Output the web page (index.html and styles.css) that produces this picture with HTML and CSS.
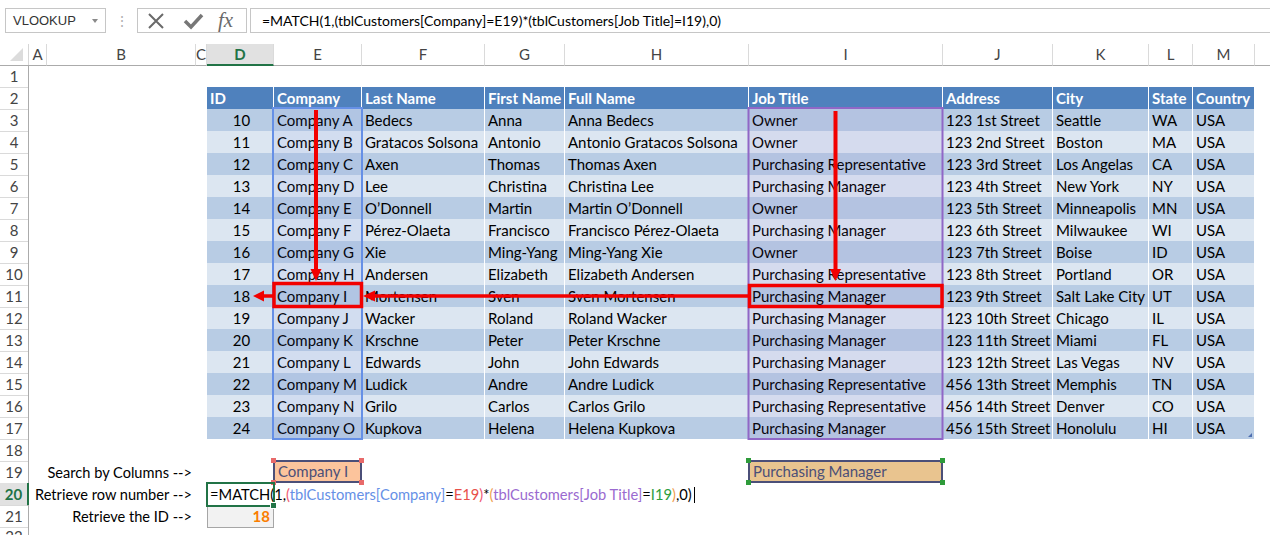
FILE: index.html
```html
<!DOCTYPE html>
<html lang="en">
<head>
    <meta charset="UTF-8">
    <title>MATCH with multiple criteria</title>
    <link rel="stylesheet" href="styles.css">
</head>
<body>

<div class="page">

    <!-- formula bar -->
    <div class="toolbar">
        <div class="namebox">VLOOKUP<span class="dropdown"></span></div>
        <div class="grip">&#8942;</div>
        <div class="fxbox">
            <svg width="108" height="24" viewBox="0 0 108 24">
                <path d="M11 5 L25 19 M25 5 L11 19" stroke="#6a6a6a" stroke-width="2" fill="none"/>
                <path d="M47 12 L53 18 L64 6" stroke="#777" stroke-width="3.5" fill="none"/>
            </svg>
            <span class="fx">fx</span>
        </div>
        <div class="formula">=MATCH(1,(tblCustomers[Company]=E19)*(tblCustomers[Job Title]=I19),0)</div>
    </div>

    <div class="sheet">
        <div class="row colhead">
            <span class="corner"><svg width="14" height="14" viewBox="0 0 14 14"><path d="M13 0 L13 13 L0 13 Z" fill="#dcdcdc"/></svg></span>
            <span class="ch">A</span><span class="ch">B</span><span class="ch">C</span><span class="ch active">D</span>
            <span class="ch">E</span><span class="ch">F</span><span class="ch">G</span><span class="ch">H</span>
            <span class="ch">I</span><span class="ch">J</span><span class="ch">K</span><span class="ch">L</span><span class="ch">M</span><span class="ch blank"></span>
        </div>

        <div class="row"><span class="rh">1</span></div>

        <div class="row thead">
            <span class="rh">2</span><span class="lead"></span>
            <span class="c">ID</span><span class="c">Company</span><span class="c">Last Name</span><span class="c">First Name</span><span class="c">Full Name</span><span class="c">Job Title</span><span class="c">Address</span><span class="c">City</span><span class="c">State</span><span class="c">Country</span>
        </div>
        <div class="row dark">
            <span class="rh">3</span><span class="lead"></span>
            <span class="c id">10</span><span class="c">Company A</span><span class="c">Bedecs</span><span class="c">Anna</span><span class="c">Anna Bedecs</span><span class="c">Owner</span><span class="c">123 1st Street</span><span class="c">Seattle</span><span class="c">WA</span><span class="c">USA</span>
        </div>
        <div class="row light">
            <span class="rh">4</span><span class="lead"></span>
            <span class="c id">11</span><span class="c">Company B</span><span class="c">Gratacos Solsona</span><span class="c">Antonio</span><span class="c">Antonio Gratacos Solsona</span><span class="c">Owner</span><span class="c">123 2nd Street</span><span class="c">Boston</span><span class="c">MA</span><span class="c">USA</span>
        </div>
        <div class="row dark">
            <span class="rh">5</span><span class="lead"></span>
            <span class="c id">12</span><span class="c">Company C</span><span class="c">Axen</span><span class="c">Thomas</span><span class="c">Thomas Axen</span><span class="c">Purchasing Representative</span><span class="c">123 3rd Street</span><span class="c">Los Angelas</span><span class="c">CA</span><span class="c">USA</span>
        </div>
        <div class="row light">
            <span class="rh">6</span><span class="lead"></span>
            <span class="c id">13</span><span class="c">Company D</span><span class="c">Lee</span><span class="c">Christina</span><span class="c">Christina Lee</span><span class="c">Purchasing Manager</span><span class="c">123 4th Street</span><span class="c">New York</span><span class="c">NY</span><span class="c">USA</span>
        </div>
        <div class="row dark">
            <span class="rh">7</span><span class="lead"></span>
            <span class="c id">14</span><span class="c">Company E</span><span class="c">O’Donnell</span><span class="c">Martin</span><span class="c">Martin O’Donnell</span><span class="c">Owner</span><span class="c">123 5th Street</span><span class="c">Minneapolis</span><span class="c">MN</span><span class="c">USA</span>
        </div>
        <div class="row light">
            <span class="rh">8</span><span class="lead"></span>
            <span class="c id">15</span><span class="c">Company F</span><span class="c">Pérez-Olaeta</span><span class="c">Francisco</span><span class="c">Francisco Pérez-Olaeta</span><span class="c">Purchasing Manager</span><span class="c">123 6th Street</span><span class="c">Milwaukee</span><span class="c">WI</span><span class="c">USA</span>
        </div>
        <div class="row dark">
            <span class="rh">9</span><span class="lead"></span>
            <span class="c id">16</span><span class="c">Company G</span><span class="c">Xie</span><span class="c">Ming-Yang</span><span class="c">Ming-Yang Xie</span><span class="c">Owner</span><span class="c">123 7th Street</span><span class="c">Boise</span><span class="c">ID</span><span class="c">USA</span>
        </div>
        <div class="row light">
            <span class="rh">10</span><span class="lead"></span>
            <span class="c id">17</span><span class="c">Company H</span><span class="c">Andersen</span><span class="c">Elizabeth</span><span class="c">Elizabeth Andersen</span><span class="c">Purchasing Representative</span><span class="c">123 8th Street</span><span class="c">Portland</span><span class="c">OR</span><span class="c">USA</span>
        </div>
        <div class="row dark">
            <span class="rh">11</span><span class="lead"></span>
            <span class="c id">18</span><span class="c">Company I</span><span class="c">Mortensen</span><span class="c">Sven</span><span class="c">Sven Mortensen</span><span class="c">Purchasing Manager</span><span class="c">123 9th Street</span><span class="c">Salt Lake City</span><span class="c">UT</span><span class="c">USA</span>
        </div>
        <div class="row light">
            <span class="rh">12</span><span class="lead"></span>
            <span class="c id">19</span><span class="c">Company J</span><span class="c">Wacker</span><span class="c">Roland</span><span class="c">Roland Wacker</span><span class="c">Purchasing Manager</span><span class="c">123 10th Street</span><span class="c">Chicago</span><span class="c">IL</span><span class="c">USA</span>
        </div>
        <div class="row dark">
            <span class="rh">13</span><span class="lead"></span>
            <span class="c id">20</span><span class="c">Company K</span><span class="c">Krschne</span><span class="c">Peter</span><span class="c">Peter Krschne</span><span class="c">Purchasing Manager</span><span class="c">123 11th Street</span><span class="c">Miami</span><span class="c">FL</span><span class="c">USA</span>
        </div>
        <div class="row light">
            <span class="rh">14</span><span class="lead"></span>
            <span class="c id">21</span><span class="c">Company L</span><span class="c">Edwards</span><span class="c">John</span><span class="c">John Edwards</span><span class="c">Purchasing Manager</span><span class="c">123 12th Street</span><span class="c">Las Vegas</span><span class="c">NV</span><span class="c">USA</span>
        </div>
        <div class="row dark">
            <span class="rh">15</span><span class="lead"></span>
            <span class="c id">22</span><span class="c">Company M</span><span class="c">Ludick</span><span class="c">Andre</span><span class="c">Andre Ludick</span><span class="c">Purchasing Representative</span><span class="c">456 13th Street</span><span class="c">Memphis</span><span class="c">TN</span><span class="c">USA</span>
        </div>
        <div class="row light">
            <span class="rh">16</span><span class="lead"></span>
            <span class="c id">23</span><span class="c">Company N</span><span class="c">Grilo</span><span class="c">Carlos</span><span class="c">Carlos Grilo</span><span class="c">Purchasing Representative</span><span class="c">456 14th Street</span><span class="c">Denver</span><span class="c">CO</span><span class="c">USA</span>
        </div>
        <div class="row dark">
            <span class="rh">17</span><span class="lead"></span>
            <span class="c id">24</span><span class="c">Company O</span><span class="c">Kupkova</span><span class="c">Helena</span><span class="c">Helena Kupkova</span><span class="c">Purchasing Manager</span><span class="c">456 15th Street</span><span class="c">Honolulu</span><span class="c">HI</span><span class="c resize">USA</span>
        </div>

        <div class="row"><span class="rh">18</span></div>

        <div class="row">
            <span class="rh">19</span><span class="label">Search by Columns --&gt;</span><span></span>
            <span></span>
            <span class="ref ref-red">Company I<i class="h tl"></i><i class="h tr"></i><i class="h bl"></i><i class="h br"></i></span>
            <span></span><span></span><span></span>
            <span class="ref ref-green">Purchasing Manager<i class="h tl"></i><i class="h tr"></i><i class="h bl"></i><i class="h br"></i></span>
        </div>
        <div class="row">
            <span class="rh active">20</span><span class="label">Retrieve row number --&gt;</span><span></span>
            <span class="editing">=MATCH(1,<b class="k1">(</b><b class="k-blue">tblCustomers[Company]</b>=<b class="k-red">E19</b><b class="k1">)</b>*<b class="k2">(</b><b class="k-purple">tblCustomers[Job Title]</b>=<b class="k-green">I19</b><b class="k2">)</b>,0)<b class="caret"></b><i class="fill-handle"></i></span>
        </div>
        <div class="row">
            <span class="rh">21</span><span class="label">Retrieve the ID --&gt;</span><span></span>
            <span class="calc">18</span>
        </div>
        <div class="row last"><span class="rh">22</span></div>
    </div>

    <!-- reference highlights and arrows drawn over the grid -->
    <svg class="overlay" width="1270" height="535" viewBox="0 0 1270 535">
        <rect x="273" y="108" width="89" height="331" fill="rgba(80,120,230,0.07)" stroke="#6690e6" stroke-width="2"/>
        <rect x="748.5" y="108" width="194" height="331" fill="rgba(130,90,200,0.07)" stroke="#9067c6" stroke-width="2"/>

        <g fill="#f20000" stroke="#f20000">
            <line x1="316" y1="110" x2="316" y2="270" stroke-width="4"/>
            <polygon points="310.5,269 321.5,269 316,281" stroke="none"/>
            <line x1="835.5" y1="111" x2="835.5" y2="270" stroke-width="4"/>
            <polygon points="830,269 841,269 835.5,281" stroke="none"/>
            <line x1="748" y1="296" x2="374" y2="296" stroke-width="3.5"/>
            <polygon points="375,290.5 375,301.5 363,296" stroke="none"/>
            <line x1="273" y1="296" x2="263" y2="296" stroke-width="3.5"/>
            <polygon points="264,290.5 264,301.5 253,296" stroke="none"/>
            <rect x="274" y="283.5" width="87.5" height="23" fill="none" stroke-width="3.5"/>
            <rect x="749.5" y="285.5" width="192.5" height="21" fill="none" stroke-width="3.5"/>
        </g>
    </svg>
</div>

</body>
</html>
```

FILE: styles.css
```css
:root {
    --cols: 29px 18px 149px 11px 67px 88px 123px 80px 184px 194px 110px 96px 44px 62px 1fr;
}
body {
    margin: 0;
    background: #fff;
    font-family: Lato, "Liberation Sans", sans-serif;
    font-size: 15px;
    color: #000;
    overflow: hidden;
}
.page {
    position: relative; /* overlay anchor */
    width: 1270px;
    height: 535px;
    overflow: hidden;
}

/* ---- formula bar ---- */
.toolbar {
    display: flex;
    align-items: flex-start;
    height: 44px;
    padding: 8px 0 0 5px;
    box-sizing: border-box;
}
.namebox {
    position: relative;
    width: 101px;
    height: 25px;
    box-sizing: border-box;
    border: 1px solid #c6c6c6;
    padding-left: 7px;
    font-family: "Liberation Sans", Arial, sans-serif;
    font-size: 13px;
    line-height: 23px;
    color: #333;
}
.dropdown {
    position: absolute;
    right: 7px;
    top: 10px;
    border-left: 3.5px solid transparent;
    border-right: 3.5px solid transparent;
    border-top: 4px solid #8a8a8a;
}
.grip {
    width: 31px;
    text-align: center;
    color: #b0b0b0;
    font-size: 14px;
    line-height: 25px;
}
.fxbox {
    position: relative;
    width: 110px;
    height: 25px;
    box-sizing: border-box;
    border: 1px solid #c6c6c6;
}
.fxbox svg {
    position: absolute;
    left: 0;
    top: 0;
}
.fx {
    position: absolute;
    left: 80px;
    top: -1px;
    font-family: "Liberation Serif", serif;
    font-style: italic;
    font-size: 21px;
    color: #6a6a6a;
}
.formula {
    flex: 1;
    height: 25px;
    margin-left: 3px;
    box-sizing: border-box;
    border: 1px solid #c6c6c6;
    border-right: none;
    padding-left: 11px;
    font-size: 14px;
    line-height: 23px;
    white-space: nowrap;
}

/* ---- grid ---- */
.row {
    display: grid;
    grid-template-columns: var(--cols);
    height: 22px;
    line-height: 21px;
    white-space: nowrap;
}
.row > span {
    box-sizing: border-box;
    min-width: 0;
    padding-top: 1px;
}
.colhead {
    height: 21px;
    line-height: 20px;
}
.colhead > span {
    padding-top: 0;
}
.corner {
    display: flex;
    align-items: flex-end;
    justify-content: flex-end;
    padding: 0 4px 3px 0;
    border-right: 1px solid #d6d6d6;
    border-bottom: 1px solid #ababab;
}
.colhead > .corner {
    padding: 0 4px 3px 0;
}
.ch {
    text-align: center;
    color: #444;
    border-right: 1px solid #dadada;
    border-bottom: 1px solid #ababab;
}
.ch.blank {
    border-right: none;
}
.ch.active {
    background: #e1e1e1;
    color: #217346;
    font-weight: bold;
    border-bottom: 2px solid #217346;
}
.rh {
    text-align: center;
    color: #444;
    border-right: 1px solid #ababab;
    border-bottom: 1px solid #dadada;
}
.rh.active {
    background: #e1e1e1;
    color: #217346;
    font-weight: bold;
    border-right: 2px solid #217346;
}
.last .rh {
    line-height: 16px;
}
.lead {
    grid-column: span 3;
}

/* ---- table ---- */
.c {
    padding-left: 3px;
    border-right: 1px solid #fff;
    border-bottom: 1px solid #fff;
    overflow: hidden;
}
.c.id {
    text-align: center;
}
.thead .c {
    background: #4f81bd;
    color: #fff;
    font-weight: bold;
}
.dark .c {
    background: #b8cce4;
}
.light .c {
    background: #dce6f1;
}
.c.resize {
    position: relative;
}
.c.resize::after {
    content: "";
    position: absolute;
    right: 2px;
    bottom: 2px;
    border-left: 4px solid transparent;
    border-bottom: 4px solid #4f6fb0;
}

/* ---- lookup area ---- */
.label {
    grid-column: span 2;
    text-align: right;
    padding-right: 4px;
    font-size: 14.6px;
}
.row > .ref {
    position: relative;
    padding: 0 0 0 3px;
    color: #4b4f78;
    border: 2px solid;
    line-height: 19px;
}
.ref-red {
    background: #fcc49c;
    border-color: #e86a6a;
    margin: -1px 0 1px -1px;
}
.ref-green {
    background: #e9c48f;
    border-color: #2e9b3a;
    margin: -1px 0 1px -1px;
}
.h {
    position: absolute;
    width: 5px;
    height: 5px;
}
.ref-red .h { background: #e86a6a; }
.ref-green .h { background: #2e9b3a; }
.h.tl { left: -4px; top: -4px; }
.h.tr { right: -4px; top: -4px; }
.h.bl { left: -4px; bottom: -4px; }
.h.br { right: -4px; bottom: -4px; }

.row > .editing {
    position: relative;
    z-index: 1;
    padding-left: 3px;
    font-size: 14.7px;
    outline: 2px solid #217346;
    outline-offset: -1px;
    overflow: visible;
}
.editing b {
    font-weight: normal;
}
.k1 { color: #ef5a72; }
.k2 { color: #efa050; }
.k-blue { color: #6690e6; }
.k-red { color: #e8504a; }
.k-purple { color: #9a6ad0; }
.k-green { color: #2e9e3e; }
.caret {
    display: inline-block;
    width: 1px;
    height: 16px;
    margin-left: 2px;
    vertical-align: -3px;
    background: #000;
}
.fill-handle {
    position: absolute;
    left: 63px;
    bottom: -3px;
    width: 5px;
    height: 5px;
    background: #217346;
    border: 1px solid #fff;
}
.row > .calc {
    background: #f2f2f2;
    border: 1px solid #a6a6a6;
    text-align: right;
    padding: 0 3px 0 0;
    line-height: 21px;
    color: #fa7d00;
    font-weight: bold;
}

.overlay {
    position: absolute;
    left: 0;
    top: 0;
    pointer-events: none;
}
```
